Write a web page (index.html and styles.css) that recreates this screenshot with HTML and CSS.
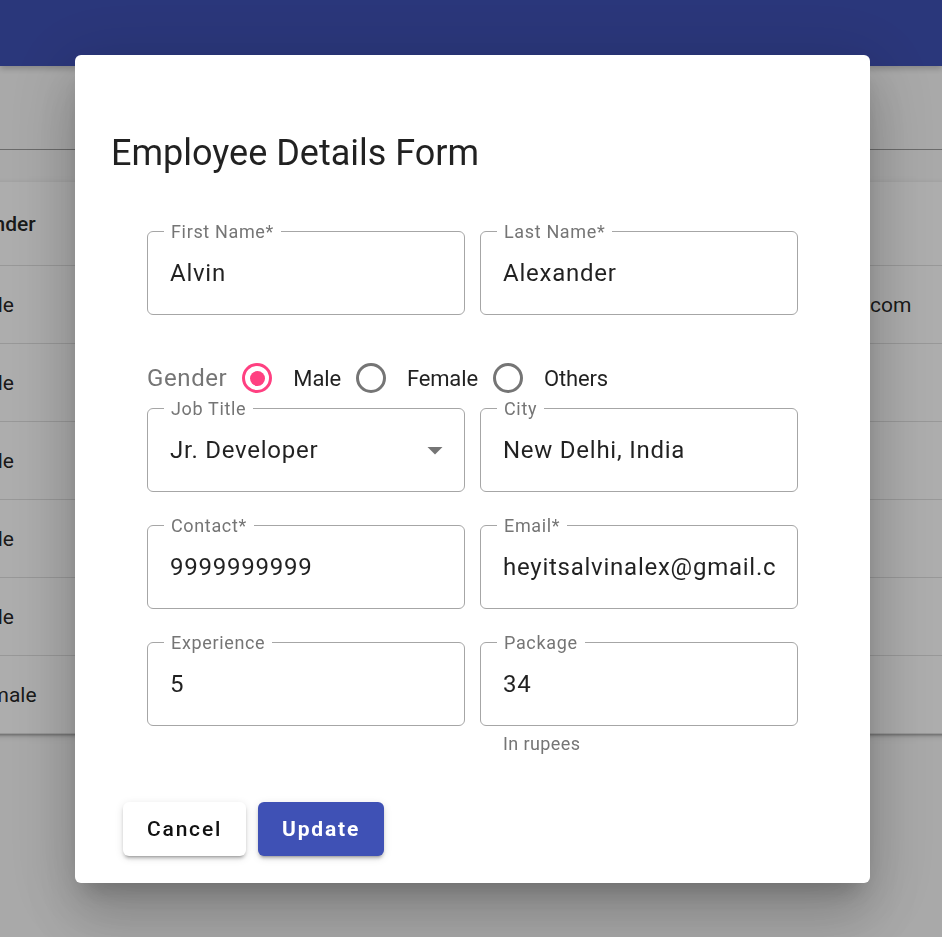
FILE: index.html
```html
<!DOCTYPE html>
<html>
<head>
    <title>Employees</title>
    <meta name="viewport" content="width=device-width, initial-scale=1.0">
    <link rel="stylesheet" href="styles.css">
</head>
<body>
    <div class="page">
        <header class="app-bar"></header>
        <div class="toolbar"></div>
        <div class="table-paper">
            <div class="table-row table-head">
                <div class="cell">Gender</div>
                <div class="cell"></div>
                <div class="cell"></div>
            </div>
            <div class="table-row">
                <div class="cell">Male</div>
                <div class="cell"></div>
                <div class="cell cell-email">heyitsalvinalex@gmail.com</div>
            </div>
            <div class="table-row">
                <div class="cell">Male</div>
                <div class="cell"></div>
                <div class="cell"></div>
            </div>
            <div class="table-row">
                <div class="cell">Male</div>
                <div class="cell"></div>
                <div class="cell"></div>
            </div>
            <div class="table-row">
                <div class="cell">Male</div>
                <div class="cell"></div>
                <div class="cell"></div>
            </div>
            <div class="table-row">
                <div class="cell">Male</div>
                <div class="cell"></div>
                <div class="cell"></div>
            </div>
            <div class="table-row">
                <div class="cell">Female</div>
                <div class="cell"></div>
                <div class="cell"></div>
            </div>
        </div>
    </div>

    <div class="backdrop"></div>

    <div class="dialog">
        <h2 class="dialog-title">Employee Details Form</h2>
        <form class="form">
            <div class="form-row">
                <label class="field">
                    <span class="field-label">First Name*</span>
                    <input class="field-input" value="Alvin">
                </label>
                <label class="field">
                    <span class="field-label">Last Name*</span>
                    <input class="field-input" value="Alexander">
                </label>
            </div>

            <div class="gender-row">
                <span class="gender-label">Gender</span>
                <span class="radio-option">
                    <span class="radio-icon checked"></span>
                    <span class="radio-text">Male</span>
                </span>
                <span class="radio-option">
                    <span class="radio-icon"></span>
                    <span class="radio-text">Female</span>
                </span>
                <span class="radio-option">
                    <span class="radio-icon"></span>
                    <span class="radio-text">Others</span>
                </span>
            </div>

            <div class="form-row">
                <label class="field">
                    <span class="field-label">Job Title</span>
                    <input class="field-input" value="Jr. Developer">
                    <svg class="select-arrow" viewBox="0 0 24 24" width="36" height="36"><path d="M7 10l5 5 5-5z"/></svg>
                </label>
                <label class="field">
                    <span class="field-label">City</span>
                    <input class="field-input" value="New Delhi, India">
                </label>
            </div>

            <div class="form-row">
                <label class="field">
                    <span class="field-label">Contact*</span>
                    <input class="field-input" value="9999999999">
                </label>
                <label class="field">
                    <span class="field-label">Email*</span>
                    <input class="field-input" value="heyitsalvinalex@gmail.com">
                </label>
            </div>

            <div class="form-row">
                <label class="field">
                    <span class="field-label">Experience</span>
                    <input class="field-input" value="5">
                </label>
                <div class="field-wrap">
                    <label class="field">
                        <span class="field-label">Package</span>
                        <input class="field-input" value="34">
                    </label>
                    <p class="helper">In rupees</p>
                </div>
            </div>
        </form>

        <div class="dialog-actions">
            <button class="btn btn-cancel">Cancel</button>
            <button class="btn btn-update">Update</button>
        </div>
    </div>
</body>
</html>
```

FILE: styles.css
```css
body {
    margin: 0;
    font-family: Roboto, "Liberation Sans", sans-serif;
    background: #fafafa;
    height: 937px;
    overflow: hidden;
}
.page {
    width: 100%;
}
.app-bar {
    height: 66px;
    background: #3f51b5;
    box-shadow: 0 3px 6px rgba(0, 0, 0, 0.2);
}
.toolbar {
    height: 83px;
    border-bottom: 1px solid #9e9e9e;
}
.table-paper {
    margin: 32px -60px 0;
    background: white;
    box-shadow: 0 3px 2px -2px rgba(0, 0, 0, 0.2), 0 2px 3px 0 rgba(0, 0, 0, 0.14), 0 2px 8px 0 rgba(0, 0, 0, 0.12);
}
.table-row {
    display: grid;
    grid-template-columns: 200px 1fr 345px;
    height: 78px;
    box-sizing: border-box;
    border-bottom: 1px solid #e0e0e0;
    font-size: 21px;
    color: rgba(0, 0, 0, 0.87);
}
.table-head {
    height: 84px;
    font-weight: 500;
}
.cell {
    display: flex;
    align-items: center;
    padding-left: 28px;
}
.cell-email {
    padding-left: 0;
}
.backdrop {
    position: fixed;
    inset: 0;
    background: rgba(0, 0, 0, 0.32);
}
.dialog {
    position: fixed;
    left: 75px;
    top: 55px;
    width: 795px;
    box-sizing: border-box;
    padding: 74px 72px 27px;
    background: white;
    border-radius: 6px;
    box-shadow: 0 16px 22px -10px rgba(0, 0, 0, 0.2), 0 36px 57px 4px rgba(0, 0, 0, 0.14), 0 13px 69px 12px rgba(0, 0, 0, 0.12);
}
.dialog-title {
    margin: 0 0 0 -36px;
    font-size: 36px;
    font-weight: 400;
    line-height: 48px;
    color: rgba(0, 0, 0, 0.87);
}
.form {
    margin-top: 54px;
}
.form-row {
    display: grid;
    grid-template-columns: 318px 318px;
    gap: 15px;
    margin-bottom: 33px;
    align-items: start;
}
.form-row:first-child {
    margin-bottom: 45px;
}
.gender-row {
    display: flex;
    align-items: center;
    height: 36px;
    margin-bottom: 12px;
}
.field {
    position: relative;
    display: block;
    height: 84px;
    box-sizing: border-box;
    padding: 27px 22px;
    border: 1px solid #a6a6a6;
    border-radius: 6px;
}
.field-label {
    position: absolute;
    top: -9px;
    left: 16px;
    padding: 0 7px;
    background: white;
    font-size: 18px;
    line-height: 18px;
    letter-spacing: 0.65px;
    color: #757575;
}
.field-input {
    display: block;
    width: 100%;
    height: 28px;
    padding: 0;
    border: 0;
    outline: none;
    background: transparent;
    font-family: inherit;
    font-size: 24px;
    letter-spacing: 0.75px;
    color: rgba(0, 0, 0, 0.87);
}
.select-arrow {
    position: absolute;
    right: 11px;
    top: 23px;
    fill: #757575;
}
.helper {
    margin: 4px 0 0 23px;
    font-size: 18px;
    line-height: 27px;
    letter-spacing: 0.4px;
    color: #757575;
}
.gender-label {
    font-size: 24px;
    letter-spacing: 0.6px;
    color: #757575;
    margin-right: 15px;
}
.radio-option {
    display: flex;
    align-items: center;
    margin-right: 15px;
}
.radio-icon {
    width: 30px;
    height: 30px;
    box-sizing: border-box;
    border: 3px solid #757575;
    border-radius: 50%;
    margin-right: 21px;
    display: flex;
    align-items: center;
    justify-content: center;
}
.radio-icon.checked {
    border-color: #ff4081;
}
.radio-icon.checked::after {
    content: "";
    width: 15px;
    height: 15px;
    border-radius: 50%;
    background: #ff4081;
}
.radio-text {
    font-size: 22px;
    letter-spacing: -0.15px;
    color: rgba(0, 0, 0, 0.87);
}
.dialog-actions {
    display: flex;
    gap: 12px;
    margin: 45px 0 0 -24px;
}
.btn {
    height: 54px;
    padding: 0 24px;
    border: 0;
    border-radius: 6px;
    font-family: inherit;
    font-size: 21px;
    font-weight: 500;
    letter-spacing: 1.8px;
    box-shadow: 0 4px 2px -3px rgba(0, 0, 0, 0.2), 0 3px 3px 0 rgba(0, 0, 0, 0.14), 0 2px 8px 0 rgba(0, 0, 0, 0.12);
    cursor: pointer;
}
.btn-cancel {
    background: white;
    color: #111;
}
.btn-update {
    background: #3f51b5;
    color: white;
    font-weight: 700;
}
```
